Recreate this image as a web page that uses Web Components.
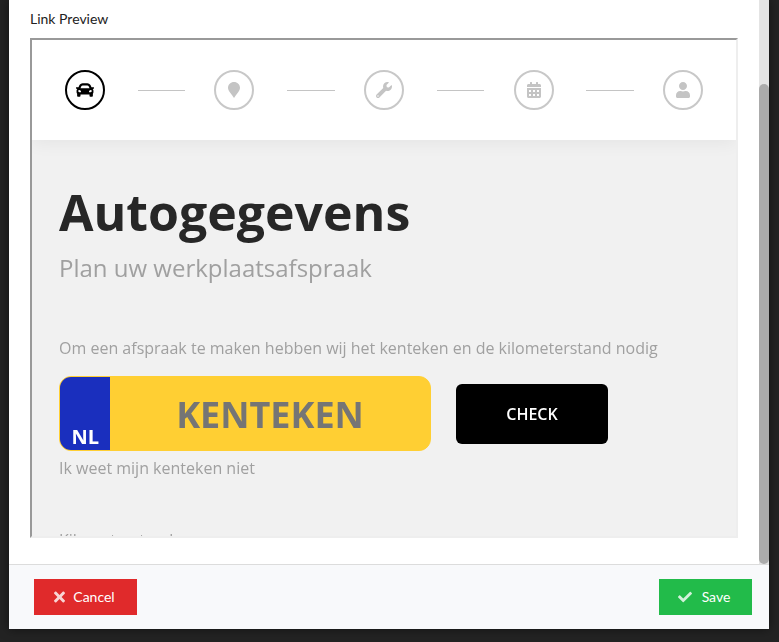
<!DOCTYPE html>
<html lang="en">

<head>
    <meta charset="UTF-8">
    <title>Link Preview</title>
    <style>
        html, body { margin: 0; height: 100%; overflow: hidden; background: #232323; }
        body { font-family: Lato, "Liberation Sans", sans-serif; }
    </style>
</head>

<body>
    <preview-modal>
        <booking-preview></booking-preview>
    </preview-modal>

<script>
    const ICONS = {
        car: ['0 0 512 512', 'M499.99 176h-59.87l-16.64-41.6C406.38 91.63 365.57 64 319.5 64h-127c-46.06 0-86.88 27.63-103.99 70.4L71.87 176H12.01C4.2 176-1.53 183.34.37 190.91l6 24C7.7 220.25 12.5 224 18.01 224h20.07C24.65 235.73 16 252.78 16 272v48c0 16.12 6.16 30.67 16 41.93V416c0 17.67 14.33 32 32 32h32c17.67 0 32-14.33 32-32v-32h256v32c0 17.67 14.33 32 32 32h32c17.67 0 32-14.33 32-32v-54.07c9.84-11.25 16-25.8 16-41.93v-48c0-19.22-8.65-36.27-22.07-48H494c5.51 0 10.31-3.75 11.64-9.09l6-24c1.89-7.57-3.84-14.91-11.65-14.91zm-352.06-17.83c7.29-18.22 24.94-30.17 44.57-30.17h127c19.63 0 37.28 11.95 44.57 30.17L384 208H128l19.93-49.83zM96 319.8c-19.2 0-32-12.76-32-31.9S76.8 256 96 256s48 28.71 48 47.85-28.8 15.95-48 15.95zm320 0c-19.2 0-48 3.19-48-15.95S396.8 256 416 256s32 12.76 32 31.9-12.8 31.9-32 31.9z'],
        pin: ['0 0 384 512', 'M192 0C86 0 0 82 0 186c0 58 30 104 70 160 40 55 84 110 122 166 38-56 82-111 122-166 40-56 70-102 70-160C384 82 298 0 192 0z'],
        wrench: ['0 0 512 512', 'M507.73 109.1c-2.24-9.03-13.54-12.09-20.12-5.51l-74.36 74.36-67.88-11.31-11.31-67.88 74.36-74.36c6.62-6.62 3.43-17.9-5.66-20.16-47.38-11.74-99.55.91-136.58 37.93-39.64 39.64-50.55 97.1-34.05 147.2L18.74 402.76c-24.99 24.99-24.99 65.51 0 90.5 24.99 24.99 65.51 24.99 90.5 0l213.21-213.21c50.12 16.71 107.47 5.68 147.37-34.22 37.07-37.07 49.7-89.32 37.91-136.73zM64 472c-13.25 0-24-10.75-24-24 0-13.26 10.75-24 24-24s24 10.74 24 24c0 13.25-10.75 24-24 24z'],
        calendar: ['0 0 448 512', 'M0 464c0 26.5 21.5 48 48 48h352c26.5 0 48-21.5 48-48V192H0v272zm320-196c0-6.6 5.4-12 12-12h40c6.6 0 12 5.4 12 12v40c0 6.6-5.4 12-12 12h-40c-6.6 0-12-5.4-12-12v-40zm0 128c0-6.6 5.4-12 12-12h40c6.6 0 12 5.4 12 12v40c0 6.6-5.4 12-12 12h-40c-6.6 0-12-5.4-12-12v-40zM192 268c0-6.6 5.4-12 12-12h40c6.6 0 12 5.4 12 12v40c0 6.6-5.4 12-12 12h-40c-6.6 0-12-5.4-12-12v-40zm0 128c0-6.6 5.4-12 12-12h40c6.6 0 12 5.4 12 12v40c0 6.6-5.4 12-12 12h-40c-6.6 0-12-5.4-12-12v-40zM64 268c0-6.6 5.4-12 12-12h40c6.6 0 12 5.4 12 12v40c0 6.6-5.4 12-12 12H76c-6.6 0-12-5.4-12-12v-40zm0 128c0-6.6 5.4-12 12-12h40c6.6 0 12 5.4 12 12v40c0 6.6-5.4 12-12 12H76c-6.6 0-12-5.4-12-12v-40zM400 64h-48V16c0-8.8-7.2-16-16-16h-32c-8.8 0-16 7.2-16 16v48H160V16c0-8.8-7.2-16-16-16h-32c-8.8 0-16 7.2-16 16v48H48C21.5 64 0 85.5 0 112v48h448v-48c0-26.5-21.5-48-48-48z'],
        user: ['0 0 448 512', 'M224 256c70.7 0 128-57.3 128-128S294.7 0 224 0 96 57.3 96 128s57.3 128 128 128zm89.6 32h-16.7c-22.2 10.2-46.9 16-72.9 16s-50.6-5.8-72.9-16h-16.7C60.2 288 0 348.2 0 422.4V464c0 26.5 21.5 48 48 48h352c26.5 0 48-21.5 48-48v-41.6c0-74.2-60.2-134.4-134.4-134.4z'],
        times: ['0 0 352 512', 'M242.72 256l100.07-100.07c12.28-12.28 12.28-32.19 0-44.48l-22.24-22.24c-12.28-12.28-32.19-12.28-44.48 0L176 189.28 75.93 89.21c-12.28-12.28-32.19-12.28-44.48 0L9.21 111.45c-12.28 12.28-12.28 32.19 0 44.48L109.28 256 9.21 356.07c-12.28 12.28-12.28 32.19 0 44.48l22.24 22.24c12.28 12.28 32.2 12.28 44.48 0L176 322.72l100.07 100.07c12.28 12.28 32.2 12.28 44.48 0l22.24-22.24c12.28-12.28 12.28-32.19 0-44.48L242.72 256z'],
        check: ['0 0 512 512', 'M173.898 439.404l-166.4-166.4c-9.997-9.997-9.997-26.206 0-36.204l36.203-36.204c9.997-9.998 26.207-9.998 36.204 0L192 312.69 432.095 72.596c9.997-9.997 26.207-9.997 36.204 0l36.203 36.204c9.997 9.997 9.997 26.206 0 36.204l-294.4 294.401c-9.998 9.997-26.207 9.997-36.204-.001z']
    };

    function iconSvg(name, height) {
        const [box, d] = ICONS[name];
        return `<svg viewBox="${box}" height="${height}" fill="currentColor" aria-hidden="true"><path d="${d}"></path></svg>`;
    }

    class StepIcon extends HTMLElement {
        constructor() {
            super();
            const size = this.getAttribute('size') || 16;
            this.attachShadow({ mode: 'open' }).innerHTML = `
                <style>
                    :host {
                        flex: none;
                        width: 40px;
                        height: 40px;
                        box-sizing: border-box;
                        border: 2px solid #c8c8c8;
                        border-radius: 50%;
                        color: #c4c4c4;
                        display: flex;
                        align-items: center;
                        justify-content: center;
                    }
                    :host([active]) { border-color: #000; color: #000; }
                    svg { display: block; }
                </style>
                ${iconSvg(this.getAttribute('icon'), size)}`;
        }
    }

    class StepBar extends HTMLElement {
        constructor() {
            super();
            this.attachShadow({ mode: 'open' }).innerHTML = `
                <style>
                    :host {
                        display: flex;
                        align-items: center;
                        height: 100px;
                        padding: 0 32.9px;
                        background: #fff;
                        box-shadow: 0 4px 16px rgba(0, 0, 0, .05);
                        position: relative;
                    }
                    i { flex: 1; height: 1px; background: #c4c4c4; margin: 0 29.1px 0 32.9px; }
                </style>
                <step-icon icon="car" size="18" active></step-icon><i></i>
                <step-icon icon="pin"></step-icon><i></i>
                <step-icon icon="wrench"></step-icon><i></i>
                <step-icon icon="calendar"></step-icon><i></i>
                <step-icon icon="user"></step-icon>`;
        }
    }

    class LicensePlate extends HTMLElement {
        constructor() {
            super();
            this.attachShadow({ mode: 'open' }).innerHTML = `
                <style>
                    :host {
                        display: flex;
                        width: 372px;
                        height: 75px;
                        box-sizing: border-box;
                        background: #ffcf33;
                        border-radius: 12px;
                        overflow: hidden;
                        border: 1px solid #ffcf33;
                    }
                    .eu {
                        width: 50px;
                        background: #1a2fbe;
                        color: #fff;
                        font-weight: 700;
                        font-size: 20px;
                        line-height: 27px;
                        display: flex;
                        align-items: flex-end;
                        justify-content: flex-end;
                        padding-right: 11px;
                        box-sizing: border-box;
                    }
                    .num {
                        flex: 1;
                        text-align: center;
                        color: #757575;
                        font-weight: 700;
                        font-size: 36px;
                        line-height: 75px;
                    }
                </style>
                <div class="eu">NL</div>
                <div class="num">KENTEKEN</div>`;
        }
    }

    class BookingPreview extends HTMLElement {
        constructor() {
            super();
            this.attachShadow({ mode: 'open' }).innerHTML = `
                <style>
                    :host {
                        display: block;
                        height: 100%;
                        font-family: "Open Sans", "Liberation Sans", sans-serif;
                        color: #a0a0a0;
                    }
                    main { padding: 35px 27px 0; will-change: transform; }
                    h1 {
                        margin: 0;
                        font-size: 50px;
                        line-height: 75px;
                        font-weight: 700;
                        color: #272727;
                    }
                    h2 {
                        margin: 0;
                        font-size: 24px;
                        line-height: 36px;
                        font-weight: 400;
                        color: #a0a0a0;
                    }
                    p { margin: 0; font-size: 16px; line-height: 24px; }
                    .intro { margin-top: 50px; }
                    .row { display: flex; align-items: center; gap: 25px; margin-top: 16px; }
                    button {
                        width: 152px;
                        height: 60px;
                        border: 0;
                        border-radius: 6px;
                        background: #000;
                        color: #fff;
                        font: 600 16px "Open Sans", "Liberation Sans", sans-serif;
                    }
                    .hint { margin-top: 5px; }
                    .km { margin-top: 48px; }
                </style>
                <step-bar></step-bar>
                <main>
                    <h1>Autogegevens</h1>
                    <h2>Plan uw werkplaatsafspraak</h2>
                    <p class="intro">Om een afspraak te maken hebben wij het kenteken en de kilometerstand nodig</p>
                    <div class="row">
                        <license-plate></license-plate>
                        <button>CHECK</button>
                    </div>
                    <p class="hint">Ik weet mijn kenteken niet</p>
                    <p class="km">Kilometerstand</p>
                </main>`;
        }
    }

    class PreviewModal extends HTMLElement {
        constructor() {
            super();
            this.attachShadow({ mode: 'open' }).innerHTML = `
                <style>
                    :host {
                        display: flex;
                        flex-direction: column;
                        width: 760px;
                        height: 629px;
                        margin-left: 9px;
                        background: #fff;
                        box-shadow: 0 0 10px rgba(0, 0, 0, .5);
                    }
                    .top { display: flex; height: 564px; }
                    .content { flex: 1; min-width: 0; padding: 10px 0 0 21px; }
                    label { display: block; font-size: 14px; line-height: 17px; color: #222; margin-bottom: 11px; }
                    .frame {
                        width: 708px;
                        height: 500px;
                        box-sizing: border-box;
                        border-style: solid;
                        border-width: 2px;
                        border-color: #999 #eee #eee #999;
                        background: #f1f1f1;
                        overflow: hidden;
                    }
                    .track { flex: none; width: 10px; background: #e4e4e4; padding-top: 84px; box-sizing: border-box; }
                    .thumb { height: 480px; background: #ababab; border-radius: 5px; }
                    footer {
                        flex: 1;
                        display: flex;
                        justify-content: space-between;
                        padding: 14px 17px 0 25px;
                        background: #f8f9fb;
                        border-top: 1px solid #dcdcdc;
                    }
                    .btn {
                        height: 36px;
                        display: flex;
                        align-items: center;
                        justify-content: center;
                        box-sizing: border-box;
                        color: #fff;
                        font-size: 14px;
                        line-height: 16px;
                        padding-bottom: 1px;
                    }
                    .btn svg { display: block; opacity: .8; }
                    .cancel { width: 103px; background: #e02a2b; gap: 8px; padding-right: 2px; }
                    .save { width: 93px; background: #22bb4a; gap: 10px; padding-right: 3px; }
                </style>
                <div class="top">
                    <div class="content">
                        <label>Link Preview</label>
                        <div class="frame"><slot></slot></div>
                    </div>
                    <div class="track"><div class="thumb"></div></div>
                </div>
                <footer>
                    <div class="btn cancel">${iconSvg('times', 16)}<span>Cancel</span></div>
                    <div class="btn save">${iconSvg('check', 14)}<span>Save</span></div>
                </footer>`;
        }
    }

    window.customElements.define('step-icon', StepIcon);
    window.customElements.define('step-bar', StepBar);
    window.customElements.define('license-plate', LicensePlate);
    window.customElements.define('booking-preview', BookingPreview);
    window.customElements.define('preview-modal', PreviewModal);
</script>
</body>

</html>
